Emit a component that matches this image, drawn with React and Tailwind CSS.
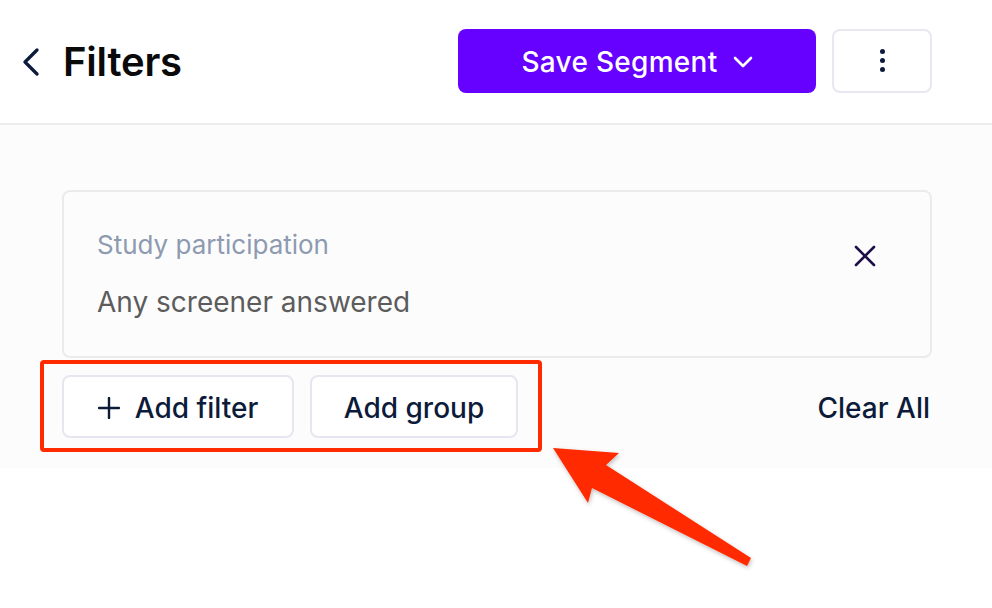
import React from 'react';

const font = { fontFamily: 'Inter, "Noto Sans", sans-serif' };

function ChevronLeft() {
  return (
    <svg width="20" height="28" viewBox="0 0 20 28" fill="none">
      <path d="M16 2 L4 14 L16 26" stroke="#0d1b3a" strokeWidth="3.2" strokeLinecap="round" strokeLinejoin="round" />
    </svg>
  );
}

function ChevronDown() {
  return (
    <svg width="20" height="12" viewBox="0 0 20 12" fill="none">
      <path d="M2 2 L10 10 L18 2" stroke="#ffffff" strokeWidth="2.6" strokeLinecap="round" strokeLinejoin="round" />
    </svg>
  );
}

function CloseIcon() {
  return (
    <svg width="22" height="22" viewBox="0 0 22 22" fill="none">
      <path d="M2 2 L20 20 M20 2 L2 20" stroke="#1e0f4a" strokeWidth="2.6" strokeLinecap="round" />
    </svg>
  );
}

function PlusIcon() {
  return (
    <svg width="22" height="22" viewBox="0 0 22 22" fill="none">
      <path d="M11 1 V21 M1 11 H21" stroke="#0d1b3a" strokeWidth="2.4" strokeLinecap="round" />
    </svg>
  );
}

// red callout drawn over the screenshot
function Annotation() {
  return (
    <svg className="absolute left-0 top-0 pointer-events-none" width="992" height="608" viewBox="0 0 992 608">
      <defs>
        <filter id="sh" x="-10%" y="-10%" width="120%" height="120%">
          <feDropShadow dx="1" dy="2" stdDeviation="2" floodColor="#000" floodOpacity="0.25" />
        </filter>
      </defs>
      <rect x="42" y="362" width="498" height="88" rx="2" fill="none" stroke="#ff2a00" strokeWidth="4" />
      <polygon
        filter="url(#sh)"
        fill="#ff2a00"
        points="553,448 619,453 606,465 751,558 747,566 592,488 588,503"
      />
    </svg>
  );
}

export default function App() {
  return (
    <div className="relative w-[992px] h-[608px] bg-white overflow-hidden" style={font}>
      {/* header */}
      <div className="h-[125px] flex items-center justify-between pl-[21px] pr-[60px] border-b-2 border-[#ececec]">
        <div className="flex items-center gap-[22px]">
          <ChevronLeft />
          <h1 className="text-[40px] font-semibold text-[#0a0a0a] tracking-[-0.2px]">Filters</h1>
        </div>
        <div className="flex items-center gap-4 mt-[-2px]">
          <button className="h-16 w-[358px] rounded-lg bg-[#6600ff] text-white text-[28px] font-medium tracking-[0.3px] flex items-center justify-center gap-[15px] pt-[2px]">
            Save Segment
            <ChevronDown />
          </button>
          <button className="h-16 w-[100px] rounded-lg border-2 border-[#e8e8f3] bg-white flex flex-col items-center justify-center gap-[4px]">
            <span className="w-[5px] h-[5px] rounded-full bg-[#0d1b3a]" />
            <span className="w-[5px] h-[5px] rounded-full bg-[#0d1b3a]" />
            <span className="w-[5px] h-[5px] rounded-full bg-[#0d1b3a]" />
          </button>
        </div>
      </div>

      {/* filter area */}
      <div className="bg-[#fcfcfc] pt-[65px] pb-[30px] pl-[62px] pr-[60px]">
        <div className="h-[168px] border-2 border-[#ebebeb] rounded-lg flex justify-between pl-[33px] pr-[54px] pt-[36px]">
          <div className="flex flex-col gap-[22px]">
            <p className="text-[26px] leading-[34px] text-[#8d9ab0]">Study participation</p>
            <p className="text-[28px] leading-[36px] text-[#5c5c5c]">Any screener answered</p>
          </div>
          <div className="mt-[17px]">
            <CloseIcon />
          </div>
        </div>

        <div className="mt-[17px] flex items-center justify-between">
          <div className="flex gap-4">
            <button className="h-[63px] w-[232px] rounded-lg border-2 border-[#e6e6f0] bg-white flex items-center justify-center gap-[15px] text-[28px] font-medium text-[#0d1b3a] pt-[2px]">
              <PlusIcon />
              Add filter
            </button>
            <button className="h-[63px] w-[208px] rounded-lg border-2 border-[#e6e6f0] bg-white flex items-center justify-center text-[28px] font-medium text-[#0d1b3a] pt-[2px]">
              Add group
            </button>
          </div>
          <span className="text-[28px] font-medium text-[#0d1b3a] pr-[2px] pt-[2px]">Clear All</span>
        </div>
      </div>

      <Annotation />
    </div>
  );
}
